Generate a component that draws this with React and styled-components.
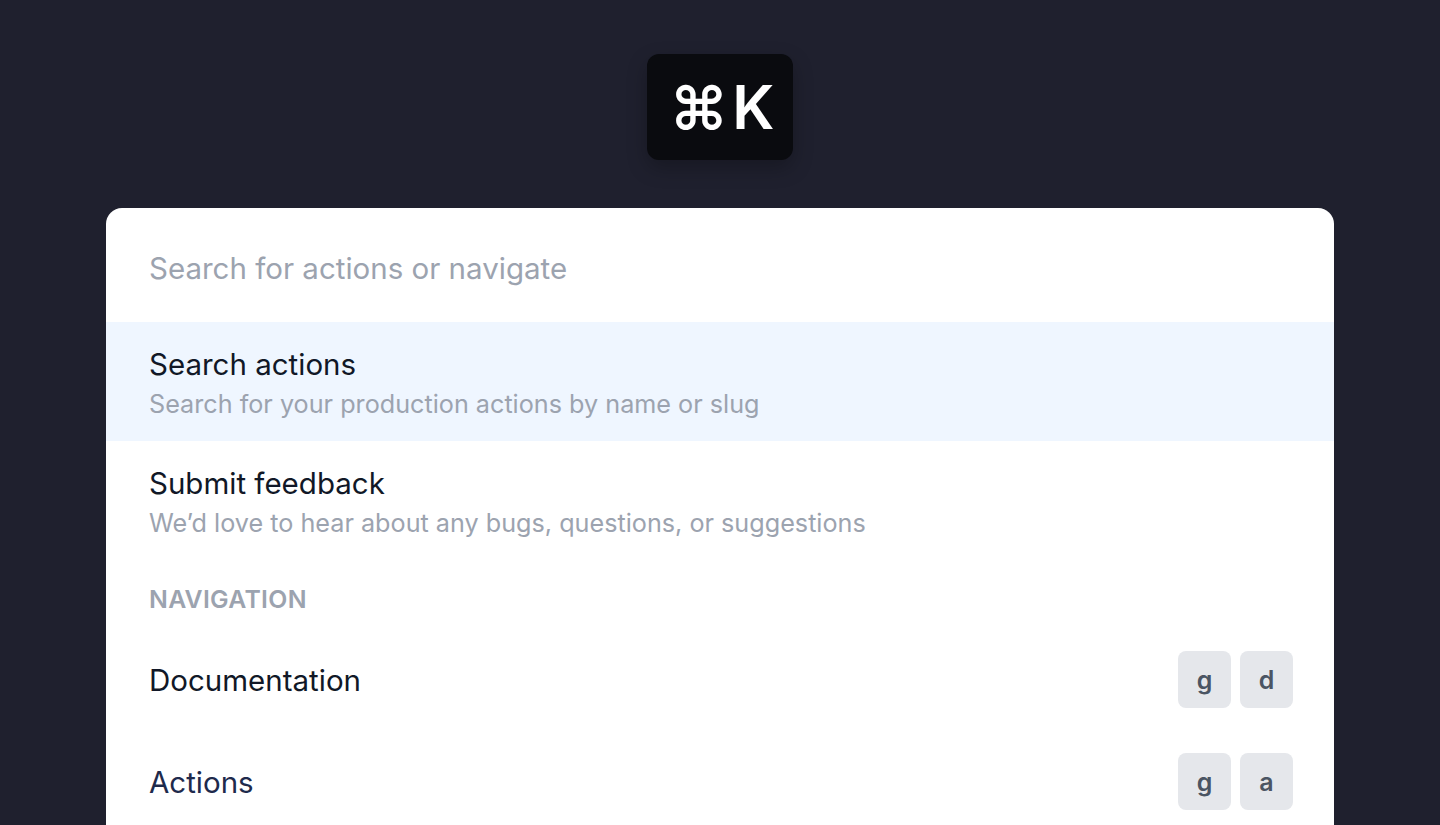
import styled, { createGlobalStyle } from "styled-components";

const GlobalStyle = createGlobalStyle`
  html, body {
    margin: 0;
    padding: 0;
    background: #1f202e;
    font-family: "Inter", "Liberation Sans", sans-serif;
    -webkit-font-smoothing: antialiased;
  }
`;

const Page = styled.div`
  height: 825px;
  box-sizing: border-box;
  display: flex;
  flex-direction: column;
  align-items: center;
  padding-top: 54px;
  overflow: hidden;
`;

const Badge = styled.div`
  flex-shrink: 0;
  box-sizing: border-box;
  width: 146px;
  height: 106px;
  padding-left: 4px;
  border-radius: 12px;
  background: #0a0b0f;
  color: #ffffff;
  display: flex;
  align-items: center;
  justify-content: center;
  gap: 4px;
  font-size: 60px;
  font-weight: 600;
  box-shadow: 0 8px 20px rgba(0, 0, 0, 0.25);
`;

const Palette = styled.div`
  flex: 1 0 auto;
  margin-top: 48px;
  width: 1228px;
  background: #ffffff;
  border-radius: 16px 16px 0 0;
  display: flex;
  flex-direction: column;
`;

const SearchInput = styled.input`
  border: none;
  outline: none;
  background: transparent;
  height: 114px;
  box-sizing: border-box;
  padding: 6px 43px 0;
  font-family: inherit;
  font-size: 29.5px;
  color: #111827;

  &::placeholder {
    color: #9ca3af;
  }
`;

const Item = styled.div`
  display: flex;
  align-items: center;
  justify-content: space-between;
  padding: ${(p) => (p.$compact ? "22px 41px 23px 43px" : "22px 43px 19px")};
  background: ${(p) => (p.$active ? "#eff6ff" : "transparent")};
`;

const Text = styled.div`
  display: flex;
  flex-direction: column;
`;

const Title = styled.div`
  font-size: 29.5px;
  line-height: 40px;
  color: ${(p) => p.$color || "#111827"};
`;

const Subtitle = styled.div`
  margin-top: 2px;
  font-size: 25.2px;
  line-height: 36px;
  color: #9ca3af;
`;

const SectionLabel = styled.div`
  padding: 21px 43px 12px;
  font-size: 24.8px;
  line-height: 36px;
  font-weight: 600;
  color: #9ca3af;
  letter-spacing: 0.3px;
`;

const Keys = styled.div`
  display: flex;
  gap: 9px;
`;

const Key = styled.kbd`
  width: 53px;
  height: 57px;
  border-radius: 8px;
  background: #e5e7eb;
  color: #4b5563;
  display: flex;
  align-items: center;
  justify-content: center;
  font-family: inherit;
  font-size: 25px;
  font-weight: 600;
`;

const actions = [
  {
    title: "Search actions",
    subtitle: "Search for your production actions by name or slug",
    active: true,
  },
  {
    title: "Submit feedback",
    subtitle: "We’d love to hear about any bugs, questions, or suggestions",
  },
];

const navigation = [
  { title: "Documentation", keys: ["g", "d"] },
  { title: "Actions", keys: ["g", "a"], color: "#1e2a4c" },
];

export default function App() {
  return (
    <>
      <GlobalStyle />
      <Page>
        <Badge>
          <span>⌘</span>
          <span>K</span>
        </Badge>
        <Palette>
          <SearchInput placeholder="Search for actions or navigate" />
          {actions.map((a) => (
            <Item key={a.title} $active={a.active}>
              <Text>
                <Title>{a.title}</Title>
                <Subtitle>{a.subtitle}</Subtitle>
              </Text>
            </Item>
          ))}
          <SectionLabel>NAVIGATION</SectionLabel>
          {navigation.map((n) => (
            <Item key={n.title} $compact>
              <Title $color={n.color}>{n.title}</Title>
              <Keys>
                {n.keys.map((k, i) => (
                  <Key key={i}>{k}</Key>
                ))}
              </Keys>
            </Item>
          ))}
        </Palette>
      </Page>
    </>
  );
}
